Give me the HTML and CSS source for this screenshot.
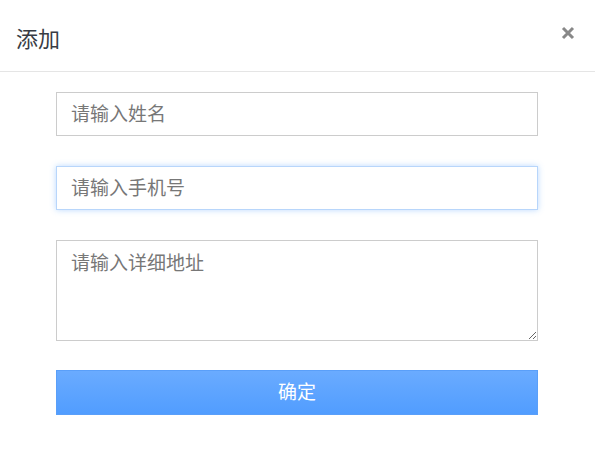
FILE: index.html
```html
<!DOCTYPE html>
<html lang="zh">
<head>
<meta charset="utf-8">
<link rel="stylesheet" href="styles.css">
</head>
<body>
<div class="modal">
  <div class="modal-header">
    <h4 class="modal-title">添加</h4>
    <button class="close" type="button" aria-label="关闭">
      <svg width="14" height="14" viewBox="0 0 14 14"><path d="M2 2 L12 12 M12 2 L2 12" stroke="#888" stroke-width="3" stroke-linecap="butt"/></svg>
    </button>
  </div>
  <form class="modal-body">
    <input class="field" type="text" placeholder="请输入姓名">
    <input class="field focus" type="text" placeholder="请输入手机号" autofocus>
    <textarea class="field area" placeholder="请输入详细地址"></textarea>
    <button class="submit" type="button">确定</button>
  </form>
</div>
</body>
</html>
```
FILE: styles.css
```css
html, body {
  margin: 0;
  padding: 0;
  background: #fff;
}
body {
  font-family: "Noto Sans CJK SC", "Noto Sans", sans-serif;
  width: 595px;
  height: 453px;
  overflow: hidden;
}
.modal {
  display: flex;
  flex-direction: column;
}
.modal-header {
  height: 72px;
  box-sizing: border-box;
  border-bottom: 1px solid #e5e5e5;
  display: flex;
  align-items: center;
  justify-content: space-between;
  padding: 2px 20px 0 16px;
}
.modal-title {
  margin: 0;
  font-size: 22px;
  font-weight: 400;
  color: #383c44;
}
.close {
  border: 0;
  background: none;
  padding: 0;
  margin: 0 0 8px 0;
  width: 14px;
  height: 14px;
  display: flex;
}
.modal-body {
  display: flex;
  flex-direction: column;
  padding: 20px 57px 0 56px;
}
.field {
  box-sizing: border-box;
  width: 482px;
  height: 44px;
  margin: 0 0 30px 0;
  border: 1px solid #ccc;
  border-radius: 0;
  padding: 0 14px 3px 14px;
  font-family: "Noto Sans CJK SC", sans-serif;
  font-size: 19px;
  color: #333;
  outline: none;
  background: #fff;
}
.field::placeholder {
  color: #777;
}
.field.focus {
  border-color: #b8d6fb;
  box-shadow: 0 0 6px rgba(102, 170, 255, 0.45);
}
.area {
  height: 101px;
  padding: 8px 14px;
  margin-bottom: 29px;
  resize: vertical;
  line-height: 26px;
}
.submit {
  width: 482px;
  height: 45px;
  border: 1px solid #5a9ff9;
  background: linear-gradient(to bottom, #6aabff, #519dff);
  color: #fff;
  font-family: "Noto Sans CJK SC", sans-serif;
  font-size: 19px;
  padding: 0 0 5px 0;
  border-radius: 0;
}
```
